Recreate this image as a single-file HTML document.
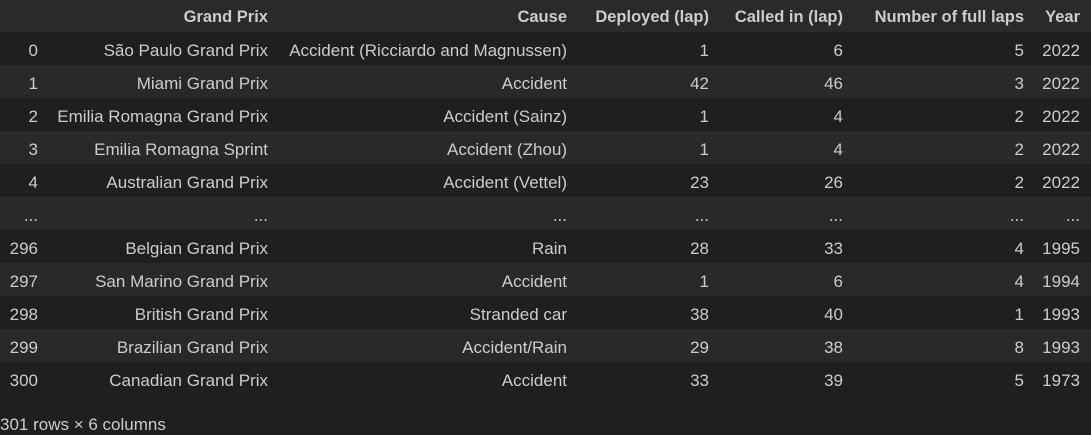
<!DOCTYPE html>
<html><head><style>
body{margin:0;background:#1f1f1f;width:1091px;height:434px;overflow:hidden;font-family:"Liberation Sans",sans-serif;font-size:17px;color:#cccccc}
.r{position:absolute;left:0;width:1091px;height:33px}
.h{background:#2a2a2a;font-weight:bold;height:32px;top:0}
.o{background:#1f1f1f}.e{background:#292929}
.c{position:absolute;top:2px;line-height:33px;text-align:right;white-space:nowrap}
.h .c{line-height:32px;top:1px;font-size:16.5px}
.ft{position:absolute;left:0;top:415px;font-size:17px}
</style></head><body>
<div class="r h">
<span class="c" style="right:823px">Grand Prix</span>
<span class="c" style="right:524px">Cause</span>
<span class="c" style="right:382px">Deployed (lap)</span>
<span class="c" style="right:248px">Called in (lap)</span>
<span class="c" style="right:67px">Number of full laps</span>
<span class="c" style="right:11px">Year</span>
</div>
<div id="rows"></div>
<script>
var d=[["0","São Paulo Grand Prix","Accident (Ricciardo and Magnussen)","1","6","5","2022"],
["1","Miami Grand Prix","Accident","42","46","3","2022"],
["2","Emilia Romagna Grand Prix","Accident (Sainz)","1","4","2","2022"],
["3","Emilia Romagna Sprint","Accident (Zhou)","1","4","2","2022"],
["4","Australian Grand Prix","Accident (Vettel)","23","26","2","2022"],
["...","...","...","...","...","...","..."],
["296","Belgian Grand Prix","Rain","28","33","4","1995"],
["297","San Marino Grand Prix","Accident","1","6","4","1994"],
["298","British Grand Prix","Stranded car","38","40","1","1993"],
["299","Brazilian Grand Prix","Accident/Rain","29","38","8","1993"],
["300","Canadian Grand Prix","Accident","33","39","5","1973"]];
var R=[1053,823,524,382,248,67,11],h="";
d.forEach(function(r,i){h+='<div class="r '+(i%2?'e':'o')+'" style="top:'+(32+i*33)+'px">';
r.forEach(function(v,j){h+='<span class="c" style="right:'+R[j]+'px">'+v+'</span>';});h+='</div>';});
document.getElementById('rows').innerHTML=h;
</script>
<div class="ft">301 rows × 6 columns</div>
</body></html>
